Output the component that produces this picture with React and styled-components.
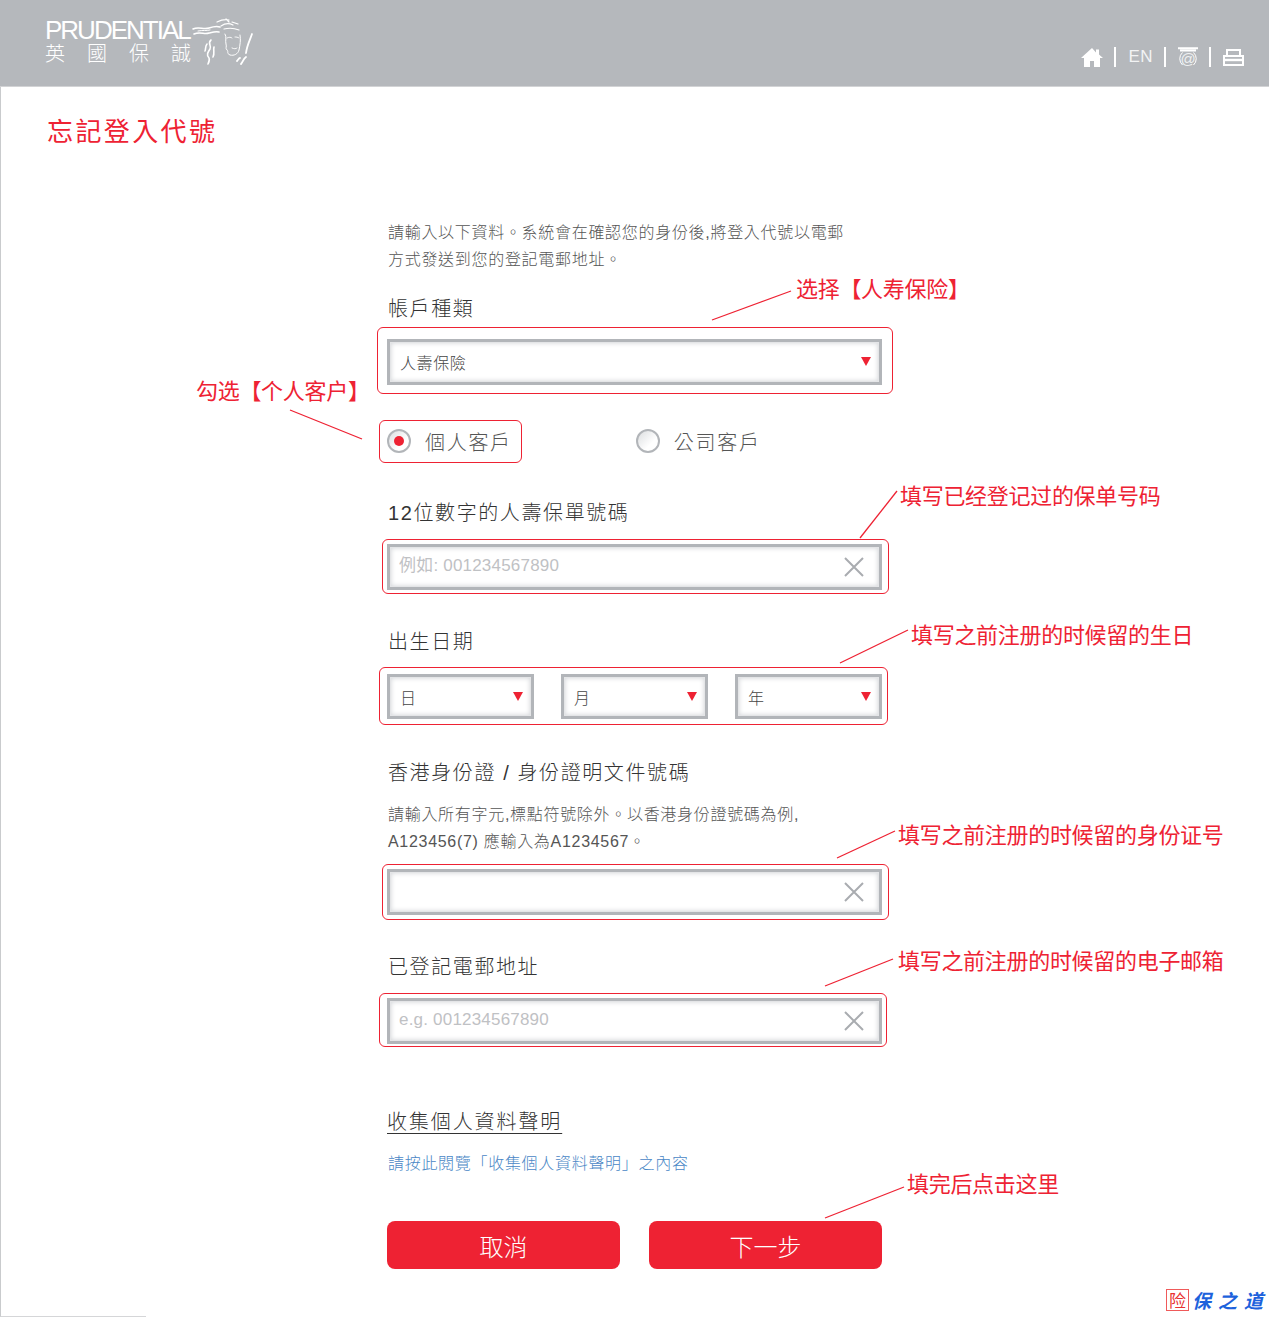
import React from "react";
import styled, { createGlobalStyle } from "styled-components";

const RED = "#ee2233";
const CJK = `"Liberation Sans", "Noto Sans CJK TC", sans-serif`;

const GlobalStyle = createGlobalStyle`
  html, body { margin: 0; padding: 0; background: #fff; }
  * { box-sizing: border-box; }
`;

const Page = styled.div`
  position: relative;
  width: 1269px;
  height: 1317px;
  overflow: hidden;
  background: #fff;
  font-family: ${CJK};
  color: #444;
  font-weight: 300;
`;

const Header = styled.header`
  height: 87px;
  background: #b5b8bc;
  border-bottom: 1px solid #d2d3d5;
  display: flex;
  justify-content: space-between;
  align-items: flex-start;
  padding: 17px 25px 0 45px;
`;

const Logo = styled.div`
  display: flex;
  color: #fff;
`;

const LogoWords = styled.div`
  width: 145px;
  white-space: nowrap;
`;

const LogoLatin = styled.div`
  font-size: 26px;
  line-height: 26px;
  letter-spacing: -2px;
  font-weight: 400;
`;

const LogoHan = styled.div`
  font-size: 20px;
  line-height: 24px;
  letter-spacing: 22px;
  margin-top: -1px;
`;

const Tools = styled.nav`
  display: flex;
  align-items: center;
  height: 20px;
  margin-top: 30px;
  color: #fff;
`;

const ToolSep = styled.span`
  width: 2px;
  height: 20px;
  background: #fff;
  margin: 0 12px 0 11px;
`;

const ToolText = styled.span`
  font-size: 17px;
  font-weight: 400;
  letter-spacing: 0.5px;
  color: #f2f3f4;
`;

const Title = styled.h1`
  margin: 25px 0 0 47px;
  font-size: 26px;
  line-height: 40px;
  letter-spacing: 2.4px;
  font-weight: 400;
  color: ${RED};
`;

const Form = styled.main`
  width: 495px;
  margin: 67px 0 0 387px;
`;

const Note = styled.p`
  margin: ${(p) => p.$top || 0}px 0 0 1px;
  font-size: 16px;
  line-height: 27px;
  letter-spacing: 0.7px;
  color: #555;
  white-space: nowrap;
`;

const Label = styled.div`
  margin: ${(p) => p.$top}px 0 0 1px;
  font-size: 20px;
  line-height: 30px;
  letter-spacing: 1.6px;
  color: #333;
  white-space: nowrap;
`;

const Heading = styled(Label)`
  margin-left: 0;
  letter-spacing: 1.9px;
  text-decoration: underline;
  text-underline-offset: 4px;
  text-decoration-thickness: 1px;
`;

const Link = styled.a`
  display: block;
  margin-top: 14px;
  font-size: 16px;
  line-height: 26px;
  letter-spacing: 0.7px;
  margin-left: 1px;
  color: #4a87c6;
`;

const Marked = styled.div`
  position: relative;
  margin-top: ${(p) => p.$top || 0}px;
  &::after {
    content: "";
    position: absolute;
    inset: ${(p) => p.$inset};
    border: 1.5px solid ${RED};
    border-radius: 6px;
    pointer-events: none;
  }
`;

const Sunken = styled.div`
  position: relative;
  display: flex;
  align-items: center;
  height: ${(p) => p.$height || 46}px;
  background: #fff;
  border: 3px solid #b2b5b9;
  box-shadow: inset 0 0 0 1px #e4e5e7, inset 0 0 5px 1px #d3d5d8;
`;

const SelectText = styled.span`
  padding-left: 10px;
  font-size: 16px;
  letter-spacing: 0.6px;
  color: #444;
`;

const Arrow = styled.i`
  position: absolute;
  right: 8px;
  top: 50%;
  margin-top: -5px;
  border-left: 5.5px solid transparent;
  border-right: 5.5px solid transparent;
  border-top: 9px solid ${RED};
`;

const DateRow = styled(Marked)`
  display: grid;
  grid-template-columns: repeat(3, 147px);
  column-gap: 27px;
`;

const TextField = styled.input`
  flex: 1;
  min-width: 0;
  height: 100%;
  border: 0;
  outline: 0;
  background: transparent;
  padding: 0 0 3px 9px;
  font-family: ${CJK};
  font-size: 17px;
  letter-spacing: 0.2px;
  color: #444;
  &::placeholder {
    color: #bfc1c4;
    opacity: 1;
  }
`;

const ClearIcon = styled.svg`
  flex: none;
  width: 20px;
  height: 20px;
  margin-right: 15px;
  stroke: #a9acb0;
  stroke-width: 2;
`;

const RadioRow = styled.div`
  display: flex;
  gap: 124px;
  margin-top: 44px;
`;

const RadioItem = styled(Marked)`
  display: flex;
  align-items: center;
  gap: 14px;
  height: 24px;
  font-size: 20px;
  letter-spacing: 1.7px;
  color: #555;
`;

const RadioDot = styled.span`
  display: flex;
  align-items: center;
  justify-content: center;
  width: 24px;
  height: 24px;
  border-radius: 50%;
  border: 2px solid #b2b5b9;
  background: linear-gradient(135deg, #dcdee0, #fff 65%);
  &::before {
    content: "";
    display: ${(p) => (p.$on ? "block" : "none")};
    width: 10px;
    height: 10px;
    border-radius: 50%;
    background: ${RED};
  }
`;

const Buttons = styled.div`
  display: flex;
  justify-content: space-between;
  margin-top: 44px;
`;

const Button = styled.button`
  width: 233px;
  height: 48px;
  border: 0;
  border-radius: 8px;
  background: ${RED};
  color: #fff;
  font-family: ${CJK};
  font-size: 24px;
  font-weight: 300;
  letter-spacing: 0;
`;

const Lines = styled.svg`
  position: absolute;
  inset: 0;
  pointer-events: none;
  fill: none;
  stroke: ${RED};
  stroke-width: 1.3;
`;

const Callout = styled.div`
  position: absolute;
  left: ${(p) => p.$x}px;
  top: ${(p) => p.$y - 16}px;
  font-family: "Noto Sans CJK SC", sans-serif;
  font-size: 22px;
  line-height: 32px;
  letter-spacing: -0.3px;
  font-weight: 400;
  color: ${RED};
  white-space: nowrap;
`;

const Watermark = styled.div`
  position: absolute;
  right: 6px;
  bottom: 6px;
  display: flex;
  align-items: center;
  gap: 3px;
`;

const Stamp = styled.span`
  width: 23px;
  height: 22px;
  border: 1px solid #ef5a5a;
  color: #e83030;
  font-family: "Noto Sans CJK SC", sans-serif;
  font-size: 17px;
  line-height: 19px;
  text-align: center;
  font-weight: 400;
`;

const WatermarkText = styled.span`
  font-family: "Noto Sans CJK SC", sans-serif;
  font-size: 19px;
  font-style: italic;
  font-weight: 700;
  line-height: 22px;
  letter-spacing: 7px;
  margin-right: -7px;
  color: #1d62dc;
`;

const PageEdge = styled.div`
  position: absolute;
  left: 0;
  top: 87px;
  bottom: 0;
  width: 146px;
  border-left: 1px solid #c9cbcd;
  border-bottom: 1px solid #d5d6d8;
  pointer-events: none;
`;

function ClearX() {
  return (
    <ClearIcon viewBox="0 0 20 20">
      <path d="M1 1 19 19M19 1 1 19" />
    </ClearIcon>
  );
}

function Select({ text, height }) {
  return (
    <Sunken $height={height}>
      <SelectText>{text}</SelectText>
      <Arrow />
    </Sunken>
  );
}

function InputBox({ placeholder }) {
  return (
    <Sunken>
      <TextField placeholder={placeholder} />
      <ClearX />
    </Sunken>
  );
}

function LogoFigure() {
  return (
    <svg width="64" height="52" viewBox="0 0 64 52" fill="none" stroke="#fff" strokeLinecap="round">
      <path d="M3 12c6-3 10 1 16-1s8-2 11-1M4 17c7-3 10 1 15-1 4-1 7-2 10-1" strokeWidth="1.6" />
      <path d="M8 14c5-1 8 0 12-1" strokeWidth="1" />
      <path d="M27 5c4-2 8-3 12-2M31 9c3-2 8-3 12-1M36 2l3 3M42 5l6 2M34 12c4-1 10-1 15 1" strokeWidth="1.2" />
      <path d="M35 17c2 3 0 7 1 10s-1 4 1 6-1 3 3 5c4 1 8-1 9-5 1-5 2-10 1-15" strokeWidth="1" />
      <path d="M37 21c2-1 4-1 5 0M45 20c1 0 3 0 4 1M42 31c2 1 4 1 5 0" strokeWidth="0.9" />
      <path d="M21 23c-4 3 1 6-1 9s-4 6-1 9c1 2 0 4-1 6M17 27c-2 2-1 5-2 7M24 30c-1 4 1 6-1 10" strokeWidth="1.6" />
      <path d="M62 17c-2 6-5 11-6 19M51 47c2-2 2-5 5-7M47 44c1-1 2-3 3-3" strokeWidth="1.8" />
    </svg>
  );
}

function HomeIcon() {
  return (
    <svg width="22" height="19" viewBox="0 0 22 19" fill="#fff">
      <path d="M11 0 0 10h3v9h6v-6h4v6h6v-9h3l-4-3.6V1.5h-3v2.9z" />
    </svg>
  );
}

function MailIcon() {
  return (
    <svg width="20" height="20" viewBox="0 0 20 20" fill="none" stroke="#fff">
      <path d="M0 1.2h20M2 3.4h16" strokeWidth="2" />
      <text x="10" y="16.5" textAnchor="middle" fontSize="15" fontFamily="Liberation Sans" fill="#eef0f1" stroke="none">@</text>
      <path d="M4.5 5.5A8.5 8.5 0 0 0 4.5 18M15.5 5.5A8.5 8.5 0 0 1 15.5 18" strokeWidth="1" />
    </svg>
  );
}

function PrintIcon() {
  return (
    <svg width="21" height="17" viewBox="0 0 21 17" fill="none" stroke="#fff" strokeWidth="2">
      <path d="M4 8V1h13v7" />
      <rect x="1" y="7" width="19" height="9" />
      <path d="M1 11h19" strokeWidth="2.4" />
    </svg>
  );
}

export default function App() {
  return (
    <Page>
      <GlobalStyle />
      <Header>
        <Logo>
          <LogoWords>
            <LogoLatin>PRUDENTIAL</LogoLatin>
            <LogoHan>英國保誠</LogoHan>
          </LogoWords>
          <LogoFigure />
        </Logo>
        <Tools>
          <HomeIcon />
          <ToolSep />
          <ToolText>EN</ToolText>
          <ToolSep />
          <MailIcon />
          <ToolSep />
          <PrintIcon />
        </Tools>
      </Header>

      <Title>忘記登入代號</Title>

      <Form>
        <Note>
          請輸入以下資料。系統會在確認您的身份後,將登入代號以電郵
          <br />
          方式發送到您的登記電郵地址。
        </Note>

        <Label $top={21}>帳戶種類</Label>
        <Marked $top={15} $inset="-12px -11px -9px -10px">
          <Select text="人壽保險" />
        </Marked>

        <RadioRow>
          <RadioItem $inset="-9px -10px -10px -8px">
            <RadioDot $on />
            個人客戶
          </RadioItem>
          <NoMark>
            <RadioDot />
            公司客戶
          </NoMark>
        </RadioRow>

        <Label $top={45}>12位數字的人壽保單號碼</Label>
        <Marked $top={16} $inset="-5px -7px -4px -5px">
          <InputBox placeholder="例如: 001234567890" />
        </Marked>

        <Label $top={37}>出生日期</Label>
        <DateRow $top={17} $inset="-7px -6px -6px -8px">
          <Select text="日" height={45} />
          <Select text="月" height={45} />
          <Select text="年" height={45} />
        </DateRow>

        <Label $top={39}>香港身份證 / 身份證明文件號碼</Label>
        <Note $top={13}>
          請輸入所有字元,標點符號除外。以香港身份證號碼為例,
          <br />
          A123456(7) 應輸入為A1234567。
        </Note>
        <Marked $top={14} $inset="-5px -7px -5px -5px">
          <InputBox />
        </Marked>

        <Label $top={37}>已登記電郵地址</Label>
        <Marked $top={16} $inset="-5px -5px -3px -8px">
          <InputBox placeholder="e.g. 001234567890" />
        </Marked>

        <Heading $top={63}>收集個人資料聲明</Heading>
        <Link>請按此閱覽「收集個人資料聲明」之內容</Link>

        <Buttons>
          <Button>取消</Button>
          <Button>下一步</Button>
        </Buttons>
      </Form>

      <PageEdge />

      <Lines width="1269" height="1317" viewBox="0 0 1269 1317">
        <path d="M712 320 791 291" />
        <path d="M290 410 362 439" />
        <path d="M860 538 897 491" />
        <path d="M840 663 908 630" />
        <path d="M837 858 895 831" />
        <path d="M825 986 893 959" />
        <path d="M825 1218 904 1187" />
      </Lines>

      <Callout $x={796} $y={287}>选择【人寿保险】</Callout>
      <Callout $x={196} $y={389}>勾选【个人客户】</Callout>
      <Callout $x={900} $y={494}>填写已经登记过的保单号码</Callout>
      <Callout $x={911} $y={633}>填写之前注册的时候留的生日</Callout>
      <Callout $x={898} $y={833}>填写之前注册的时候留的身份证号</Callout>
      <Callout $x={898} $y={959}>填写之前注册的时候留的电子邮箱</Callout>
      <Callout $x={907} $y={1182}>填完后点击这里</Callout>

      <Watermark>
        <Stamp>险</Stamp>
        <WatermarkText>保之道</WatermarkText>
      </Watermark>
    </Page>
  );
}

const NoMark = styled.div`
  display: flex;
  align-items: center;
  gap: 14px;
  height: 24px;
  font-size: 20px;
  letter-spacing: 1.7px;
  color: #555;
`;
